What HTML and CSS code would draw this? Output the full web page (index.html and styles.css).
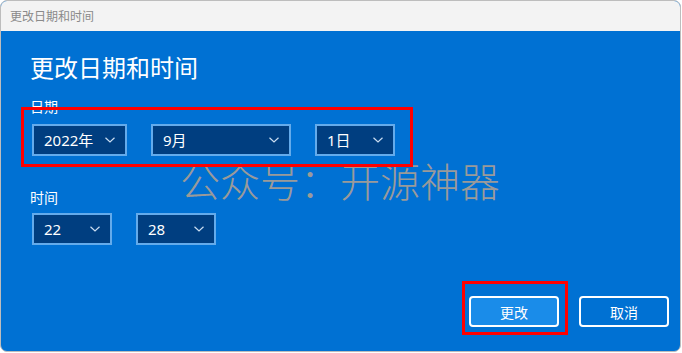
FILE: index.html
```html
<!DOCTYPE html>
<html lang="zh-CN">
<head>
<meta charset="utf-8">
<title>更改日期和时间</title>
<link rel="stylesheet" href="styles.css">
</head>
<body>
<div class="window">
  <div class="titlebar">更改日期和时间</div>
  <div class="content">
    <h1 class="heading">更改日期和时间</h1>
    <div class="group">
      <div class="label">日期</div>
      <div class="row">
        <div class="select w95"><span>2022年</span><svg class="chev" viewBox="0 0 10 6"><path d="M0.5 0.8 L5 5 L9.5 0.8"/></svg></div>
        <div class="select w140"><span>9月</span><svg class="chev" viewBox="0 0 10 6"><path d="M0.5 0.8 L5 5 L9.5 0.8"/></svg></div>
        <div class="select w80"><span>1日</span><svg class="chev" viewBox="0 0 10 6"><path d="M0.5 0.8 L5 5 L9.5 0.8"/></svg></div>
      </div>
    </div>
    <div class="group group-time">
      <div class="label label-time">时间</div>
      <div class="row">
        <div class="select w80"><span>22</span><svg class="chev" viewBox="0 0 10 6"><path d="M0.5 0.8 L5 5 L9.5 0.8"/></svg></div>
        <div class="select w80"><span>28</span><svg class="chev" viewBox="0 0 10 6"><path d="M0.5 0.8 L5 5 L9.5 0.8"/></svg></div>
      </div>
    </div>
    <div class="actions">
      <button class="btn btn-primary">更改</button>
      <button class="btn">取消</button>
    </div>
  </div>
  <div class="watermark">公众号：开源神器</div>
  <div class="mark mark-date"></div>
  <div class="mark mark-btn"></div>
</div>
</body>
</html>
```
FILE: styles.css
```css
html, body {
  margin: 0;
  padding: 0;
  background: #ffffff;
}
body {
  font-family: "Noto Sans", "Noto Sans CJK SC", sans-serif;
  width: 682px;
  height: 353px;
  overflow: hidden;
}
.window {
  position: relative;
  width: 679px;
  height: 350px;
  border: 1px solid #bdbdbd;
  border-radius: 7px;
  overflow: hidden;
  display: flex;
  flex-direction: column;
  background: #0071d3;
}
.titlebar {
  height: 30px;
  flex: none;
  background: #f3f3f3;
  color: #8a8a8a;
  font-size: 12px;
  line-height: 30px;
  padding-left: 9px;
  font-family: "Noto Sans CJK SC", sans-serif;
}
.content {
  flex: 1;
  display: flex;
  flex-direction: column;
  padding: 20px 11px 24px 30px;
  color: #ffffff;
}
.heading {
  margin: 0 0 0 -1px;
  font-size: 24px;
  line-height: 32px;
  font-weight: 400;
  font-family: "Noto Sans CJK SC", sans-serif;
}
.group {
  margin-top: 13px;
}
.group-time {
  margin-top: 31px;
}
.label {
  font-size: 14px;
  line-height: 20px;
  margin-bottom: 8px;
  margin-left: -1px;
  font-family: "Noto Sans CJK SC", sans-serif;
}
.label-time {
  margin-bottom: 6px;
}
.row {
  display: flex;
  gap: 24px;
  margin-left: 1px;
}
.select {
  box-sizing: border-box;
  height: 32px;
  border: 2px solid #64abeb;
  background: #003e80;
  display: flex;
  align-items: center;
  justify-content: space-between;
  padding: 0 10px;
  font-size: 15px;
  color: #ffffff;
}
.select span {
  line-height: 20px;
}
.w95 { width: 95px; }
.w140 { width: 140px; }
.w80 { width: 80px; }
.chev {
  width: 10px;
  height: 6px;
  fill: none;
  stroke: #c9dcf0;
  stroke-width: 1.2;
}
.actions {
  margin-top: auto;
  display: flex;
  justify-content: flex-end;
  gap: 20px;
}
.btn {
  box-sizing: border-box;
  width: 90px;
  height: 31px;
  border: 2px solid #ffffff;
  border-radius: 4px;
  background: transparent;
  color: #ffffff;
  font-size: 14px;
  font-family: "Noto Sans CJK SC", sans-serif;
  padding: 0;
}
.btn-primary {
  background: #1a8ce9;
}
.watermark {
  position: absolute;
  left: 179px;
  top: 157px;
  font-size: 40px;
  line-height: 44px;
  color: #9a9a9a;
  font-weight: 300;
  font-family: "Noto Sans CJK SC", sans-serif;
  white-space: nowrap;
  pointer-events: none;
}
.mark {
  position: absolute;
  box-sizing: border-box;
  border: 3px solid #ff0000;
  pointer-events: none;
}
.mark-date {
  left: 20px;
  top: 106px;
  width: 392px;
  height: 60px;
}
.mark-btn {
  left: 461px;
  top: 280px;
  width: 106px;
  height: 54px;
}
```
